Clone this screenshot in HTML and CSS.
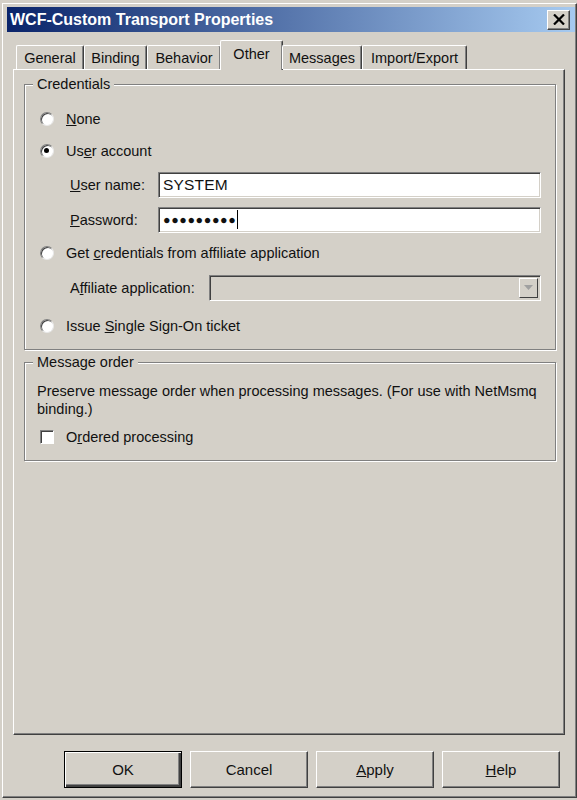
FILE: index.html
```html
<!DOCTYPE html>
<html>
<head>
<meta charset="utf-8">
<title>WCF-Custom Transport Properties</title>
<link rel="stylesheet" href="styles.css">
</head>
<body>
<div class="window">
  <div class="titlebar">
    <span class="title">WCF-Custom Transport Properties</span>
    <div class="close">
      <svg width="12" height="11" viewBox="0 0 12 11"><path d="M1 0.5 L11 10.5 M11 0.5 L1 10.5" stroke="#000" stroke-width="2.2"/></svg>
    </div>
  </div>
  <div class="tabs">
    <div class="tab t-general">General</div>
    <div class="tab t-binding">Binding</div>
    <div class="tab t-behavior">Behavior</div>
    <div class="tab t-other active">Other</div>
    <div class="tab t-messages">Messages</div>
    <div class="tab t-import">Import/Export</div>
  </div>
  <div class="panel">
    <fieldset class="group credentials">
      <legend>Credentials</legend>
      <div class="row radio-row"><span class="radio"></span><span class="lbl"><u>N</u>one</span></div>
      <div class="row radio-row"><span class="radio checked"></span><span class="lbl">Us<u>e</u>r account</span></div>
      <div class="row field-row"><span class="flabel"><u>U</u>ser name:</span><div class="input"><span class="value">SYSTEM</span></div></div>
      <div class="row field-row"><span class="flabel"><u>P</u>assword:</span><div class="input"><span class="dots">●●●●●●●●●</span><span class="caret"></span></div></div>
      <div class="row radio-row"><span class="radio"></span><span class="lbl">Get <u>c</u>redentials from affiliate application</span></div>
      <div class="row field-row tall"><span class="flabel wide">A<u>f</u>filiate application:</span><div class="combo"><span class="drop"><svg width="9" height="6" viewBox="0 0 9 6"><path d="M0 0 H9 L4.5 5 Z" fill="#a0a0a0"/></svg></span></div></div>
      <div class="row radio-row tall"><span class="radio"></span><span class="lbl">Issue <u>S</u>ingle Sign-On ticket</span></div>
    </fieldset>
    <fieldset class="group order">
      <legend>Message order</legend>
      <p class="desc">Preserve message order when processing messages. (For use with NetMsmq<br>binding.)</p>
      <div class="check-row"><span class="checkbox"></span><span class="lbl">O<u>r</u>dered processing</span></div>
    </fieldset>
  </div>
  <div class="buttons">
    <div class="btn default">OK</div>
    <div class="btn">Cancel</div>
    <div class="btn"><u>A</u>pply</div>
    <div class="btn"><u>H</u>elp</div>
  </div>
</div>
</body>
</html>
```
FILE: styles.css
```css
html, body {
  margin: 0;
  padding: 0;
}
body {
  width: 577px;
  height: 800px;
  overflow: hidden;
  background: #d4d0c8;
  font-family: "Liberation Sans", Arial, sans-serif;
  font-size: 14.5px;
  color: #111;
}
.window {
  box-sizing: border-box;
  height: 795px;
  margin: 3px 0 0 2px;
  border-top: 1px solid #fff;
  border-left: 1px solid #fff;
  border-right: 1px solid #404040;
  border-bottom: 1px solid #404040;
  box-shadow: inset -1px -1px 0 #808080;
  padding: 3px 1px 9px 4px;
  display: flex;
  flex-direction: column;
}
.titlebar {
  height: 25px;
  flex: none;
  background: linear-gradient(to right, #0a246a, #a6caf0);
  display: flex;
  align-items: center;
  justify-content: space-between;
  padding: 0 5px 0 3px;
}
.title {
  color: #fff;
  font-weight: bold;
  font-size: 16px;
}
.close {
  box-sizing: border-box;
  width: 23px;
  height: 20px;
  background: #d4d0c8;
  border-top: 1px solid #fff;
  border-left: 1px solid #fff;
  border-right: 1px solid #404040;
  border-bottom: 1px solid #404040;
  box-shadow: inset -1px -1px 0 #808080;
  display: flex;
  align-items: center;
  justify-content: center;
}
.tabs {
  flex: none;
  display: flex;
  align-items: flex-end;
  height: 29px;
  margin-top: 8px;
  padding-left: 9px;
  position: relative;
  z-index: 1;
}
.tab {
  box-sizing: border-box;
  height: 24px;
  display: flex;
  align-items: center;
  justify-content: center;
  border-top: 1px solid #fff;
  border-left: 1px solid #fff;
  border-right: 1px solid #404040;
  box-shadow: inset -1px 0 0 #808080;
  border-radius: 2px 2px 0 0;
}
.t-general { width: 68px; }
.t-binding { width: 63px; }
.t-behavior { width: 74px; }
.t-other { width: 63px; }
.t-messages { width: 80px; }
.t-import { width: 105px; }
.tab.active {
  height: 30px;
  margin-bottom: -1px;
  padding-bottom: 4px;
  margin-left: -1px;
  margin-right: -1px;
  background: #d4d0c8;
}
.panel {
  flex: 1;
  box-sizing: border-box;
  margin: 0 10px 0 6px;
  border-top: 1px solid #fff;
  border-left: 1px solid #fff;
  border-right: 1px solid #404040;
  border-bottom: 1px solid #404040;
  box-shadow: inset -1px -1px 0 #808080;
  padding: 6px 8px 0 10px;
  display: flex;
  flex-direction: column;
  gap: 4px;
}
.group {
  margin: 0;
  border: 1px solid #808080;
  box-shadow: inset 1px 1px 0 #fff, 1px 1px 0 #fff;
  padding: 0 14px 0 15px;
}
.group legend {
  padding: 0 4px;
  margin-left: -7px;
  background: #d4d0c8;
  line-height: 17px;
}
.credentials {
  padding-top: 10px;
  padding-bottom: 4px;
}
.row {
  display: flex;
  align-items: center;
}
.radio-row {
  height: 32px;
}
.field-row {
  height: 35px;
  padding-left: 30px;
}
.radio-row.tall,
.field-row.tall {
  height: 38px;
}
.radio {
  box-sizing: border-box;
  width: 14px;
  height: 14px;
  border-radius: 50%;
  background: #fff;
  border: 1px solid;
  border-color: #808080 #e8e8e8 #e8e8e8 #808080;
  box-shadow: inset 1px 1px 0 #404040;
  margin-right: 12px;
  position: relative;
  flex: none;
}
.radio.checked::after {
  content: "";
  position: absolute;
  left: 3px;
  top: 3px;
  width: 5px;
  height: 5px;
  border-radius: 50%;
  background: #000;
}
.flabel {
  width: 88px;
  flex: none;
}
.flabel.wide {
  width: 139px;
}
.input {
  box-sizing: border-box;
  flex: 1;
  height: 26px;
  background: #fff;
  border: 1px solid;
  border-color: #808080 #fff #fff #808080;
  box-shadow: inset 1px 1px 0 #404040, inset -1px -1px 0 #d4d0c8;
  display: flex;
  align-items: center;
  padding-left: 4px;
}
.value {
  font-size: 15.5px;
  letter-spacing: 0.2px;
}
.dots {
  font-size: 12.5px;
  letter-spacing: 0.6px;
}
.caret {
  width: 1px;
  height: 19px;
  background: #000;
  margin-left: 1px;
}
.combo {
  box-sizing: border-box;
  flex: 1;
  height: 26px;
  background: #d4d0c8;
  border: 1px solid;
  border-color: #808080 #fff #fff #808080;
  box-shadow: inset 1px 1px 0 #404040, inset -1px -1px 0 #d4d0c8;
  display: flex;
  justify-content: flex-end;
  padding: 2px;
}
.drop {
  box-sizing: border-box;
  width: 19px;
  height: 100%;
  background: #d4d0c8;
  border-top: 1px solid #fff;
  border-left: 1px solid #fff;
  border-right: 1px solid #404040;
  border-bottom: 1px solid #404040;
  display: flex;
  align-items: center;
  justify-content: center;
}
.order {
  padding-top: 11px;
  padding-bottom: 4px;
}
.desc {
  margin: 0 0 0 -3px;
  line-height: 18px;
}
.check-row {
  display: flex;
  align-items: center;
  height: 38px;
}
.checkbox {
  box-sizing: border-box;
  width: 14px;
  height: 14px;
  background: #fff;
  border: 1px solid;
  border-color: #808080 #fff #fff #808080;
  box-shadow: inset 1px 1px 0 #404040;
  margin-right: 12px;
  flex: none;
}
.buttons {
  flex: none;
  display: flex;
  justify-content: flex-end;
  gap: 8px;
  margin-top: 16px;
  padding-right: 15px;
}
.btn {
  box-sizing: border-box;
  width: 118px;
  height: 37px;
  display: flex;
  align-items: center;
  justify-content: center;
  border-top: 1px solid #fff;
  border-left: 1px solid #fff;
  border-right: 1px solid #404040;
  border-bottom: 1px solid #404040;
  box-shadow: inset -1px -1px 0 #808080;
  font-size: 15px;
}
.btn.default {
  border: 1px solid #000;
  box-shadow: inset 1px 1px 0 #fff, inset -2px -2px 0 #404040, inset -3px -3px 0 #808080;
}
```
